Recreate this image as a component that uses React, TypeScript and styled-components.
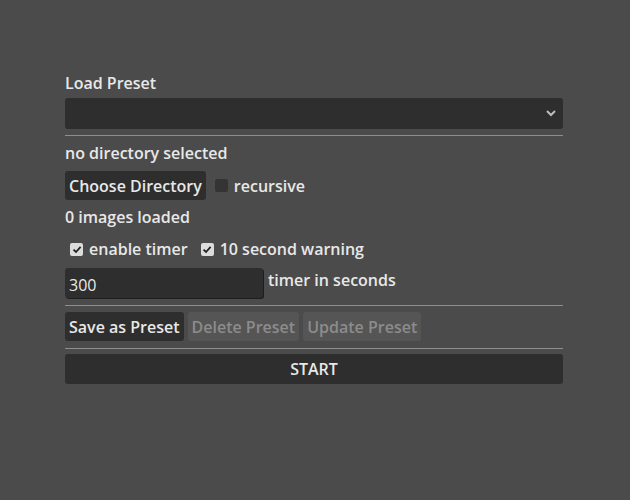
import React, { useState } from "react";
import styled, { createGlobalStyle } from "styled-components";

const GlobalStyle = createGlobalStyle`
  html, body {
    margin: 0;
    padding: 0;
    background: #4b4b4b;
    color: #e8e8e8;
    font-family: "Open Sans", "Noto Sans", sans-serif;
    font-weight: 600;
    font-size: 16px;
  }
`;

const Panel = styled.div`
  width: 498px;
  margin: 0 0 0 65px;
  padding-top: 72px;
  display: flex;
  flex-direction: column;
`;

const Line = styled.div<{ $top?: number }>`
  line-height: 22px;
  margin-top: ${(p) => p.$top ?? 0}px;
  white-space: nowrap;
`;

const Row = styled.div<{ $top?: number; $gap?: number; $pad?: number; $start?: boolean }>`
  display: flex;
  align-items: ${(p) => (p.$start ? "flex-start" : "center")};
  gap: ${(p) => p.$gap ?? 0}px;
  padding-left: ${(p) => p.$pad ?? 0}px;
  margin-top: ${(p) => p.$top ?? 0}px;
`;

const Divider = styled.hr<{ $top?: number }>`
  border: 0;
  height: 1px;
  background: #8e8e8e;
  margin: ${(p) => p.$top ?? 6}px 0 0;
  width: 100%;
`;

const SelectWrap = styled.div`
  position: relative;
  margin-top: 4px;
  height: 31px;
`;

const Select = styled.select`
  appearance: none;
  width: 100%;
  height: 31px;
  background: #2e2e2e;
  border: 0;
  border-radius: 3px;
  color: #e8e8e8;
  font: inherit;
  padding: 0 28px 0 6px;
  outline: none;
`;

const Chevron = styled.svg`
  position: absolute;
  right: 6px;
  top: 10px;
  pointer-events: none;
`;

const Button = styled.button<{ $wide?: boolean }>`
  font-family: inherit;
  font-weight: 600;
  font-size: 16px;
  height: 29px;
  padding: 0 4px;
  border: 0;
  border-radius: 3px;
  background: #2e2e2e;
  color: #e8e8e8;
  white-space: nowrap;
  ${(p) => p.$wide && "width: 100%; height: 30px; text-transform: uppercase;"}
  &:disabled {
    background: #555555;
    color: #8c8c8c;
  }
`;

const CheckLabel = styled.label`
  display: inline-flex;
  align-items: center;
  gap: 6px;
  line-height: 22px;
  cursor: pointer;
`;

const Box = styled.span<{ $on: boolean }>`
  width: 13px;
  height: 13px;
  border-radius: 2px;
  background: ${(p) => (p.$on ? "#dcdcdc" : "#343434")};
  display: inline-flex;
  align-items: center;
  justify-content: center;
`;

const NumberInput = styled.input`
  width: 198px;
  height: 30px;
  box-sizing: border-box;
  background: #2e2e2e;
  border: 0;
  border-radius: 3px;
  box-shadow: 1px 1px 0 #1e1e1e;
  color: #e8e8e8;
  font-family: inherit;
  font-weight: 400;
  font-size: 16px;
  padding: 3px 4px 0;
  outline: none;
`;

function Check({ on, label }: { on: boolean; label: string }) {
  return (
    <CheckLabel>
      <Box $on={on}>
        {on && (
          <svg width="10" height="9" viewBox="0 0 10 9">
            <path d="M1.5 4.6 L4 7 L8.6 1.8" fill="none" stroke="#222" strokeWidth="1.8" />
          </svg>
        )}
      </Box>
      {label}
    </CheckLabel>
  );
}

export default function App() {
  const [seconds, setSeconds] = useState("300");
  return (
    <>
      <GlobalStyle />
      <Panel>
        <Line>Load Preset</Line>
        <SelectWrap>
          <Select defaultValue="">
            <option value=""></option>
          </Select>
          <Chevron width="12" height="10" viewBox="0 0 12 10">
            <path d="M2 3 L6 7 L10 3" fill="none" stroke="#bdbdbd" strokeWidth="2" />
          </Chevron>
        </SelectWrap>
        <Divider $top={6} />
        <Line $top={6}>no directory selected</Line>
        <Row $top={7} $gap={9}>
          <Button>Choose Directory</Button>
          <Check on={false} label="recursive" />
        </Row>
        <Line $top={6}>0 images loaded</Line>
        <Row $top={10} $gap={13} $pad={5}>
          <Check on label="enable timer" />
          <Check on label="10 second warning" />
        </Row>
        <Row $top={8} $gap={5} $start>
          <NumberInput
            type="number"
            value={seconds}
            onChange={(e) => setSeconds(e.target.value)}
          />
          <Line $top={1}>timer in seconds</Line>
        </Row>
        <Divider $top={7} />
        <Row $top={6} $gap={4}>
          <Button>Save as Preset</Button>
          <Button disabled>Delete Preset</Button>
          <Button disabled>Update Preset</Button>
        </Row>
        <Divider $top={7} />
        <Row $top={5}>
          <Button $wide>START</Button>
        </Row>
      </Panel>
    </>
  );
}
